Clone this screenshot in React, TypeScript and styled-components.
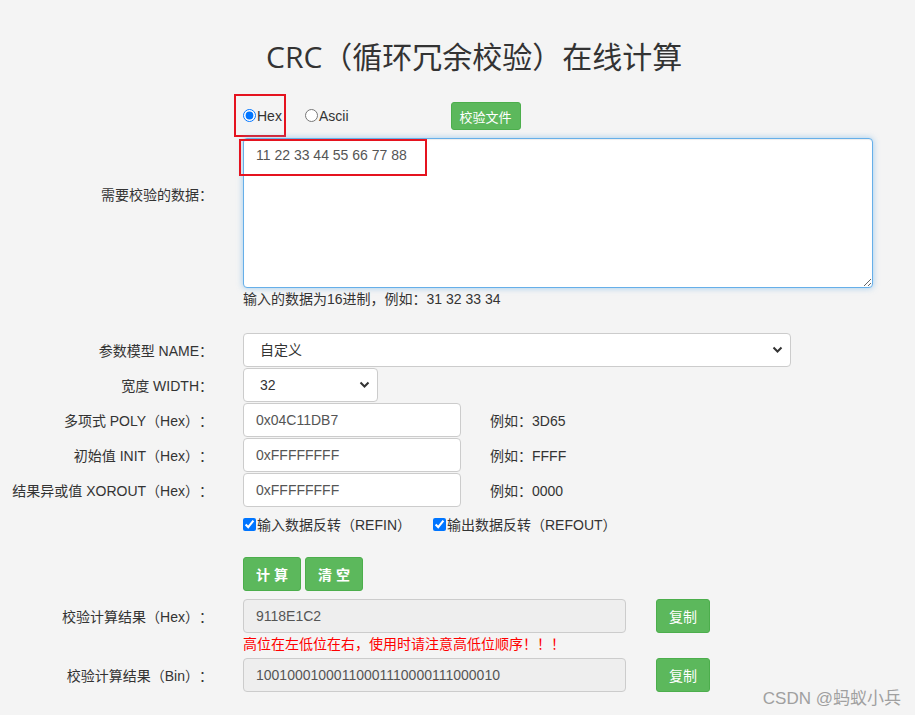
import React from "react";
import styled, { createGlobalStyle } from "styled-components";

const GlobalStyle = createGlobalStyle`
    html, body {
        margin: 0;
        padding: 0;
        background: #f4f4f4;
    }
    body {
        font-family: "Liberation Sans", "Noto Sans CJK SC", sans-serif;
        font-size: 14px;
        color: #333;
        text-spacing-trim: space-all;
    }
    input, textarea, select, button {
        text-spacing-trim: space-all;
    }
`;

const FONT = `"Liberation Sans", "Noto Sans CJK SC", sans-serif`;

function Chevron() {
    return (
        <svg width="11" height="8" viewBox="0 0 11 8">
            <path d="M1.5 1.5 L5.5 5.5 L9.5 1.5" fill="none" stroke="#333" strokeWidth="2" />
        </svg>
    );
}

function App() {
    return (
        <Page>
            <GlobalStyle />
            <Title>CRC（循环冗余校验）在线计算</Title>

            <ModeRow>
                <Marked>
                    <RadioLabel>
                        <input type="radio" name="mode" defaultChecked />Hex
                    </RadioLabel>
                </Marked>
                <RadioLabel>
                    <input type="radio" name="mode" />Ascii
                </RadioLabel>
                <GreenButton $w={70} $h={28} $size={13}>校验文件</GreenButton>
            </ModeRow>

            <DataRow>
                <Label $top={46}>需要校验的数据：</Label>
                <div>
                    <AreaWrap>
                        <DataArea defaultValue="11 22 33 44 55 66 77 88" />
                        <TextMark />
                    </AreaWrap>
                    <Help>输入的数据为16进制，例如：31 32 33 34</Help>
                </div>
            </DataRow>

            <Params>
                <Row>
                    <Label>参数模型 NAME：</Label>
                    <SelectWrap $w={548}>
                        <Select defaultValue="custom">
                            <option value="custom">自定义</option>
                        </Select>
                        <Arrow><Chevron /></Arrow>
                    </SelectWrap>
                </Row>
                <Row>
                    <Label>宽度 WIDTH：</Label>
                    <SelectWrap $w={135}>
                        <Select defaultValue="32">
                            <option value="32">32</option>
                        </Select>
                        <Arrow><Chevron /></Arrow>
                    </SelectWrap>
                </Row>
                <Row>
                    <Label>多项式 POLY（Hex）：</Label>
                    <Field>
                        <TextInput defaultValue="0x04C11DB7" />
                        <Hint>例如：3D65</Hint>
                    </Field>
                </Row>
                <Row>
                    <Label>初始值 INIT（Hex）：</Label>
                    <Field>
                        <TextInput defaultValue="0xFFFFFFFF" />
                        <Hint>例如：FFFF</Hint>
                    </Field>
                </Row>
                <Row>
                    <Label>结果异或值 XOROUT（Hex）：</Label>
                    <Field>
                        <TextInput defaultValue="0xFFFFFFFF" />
                        <Hint>例如：0000</Hint>
                    </Field>
                </Row>
            </Params>

            <CheckRow>
                <CheckLabel $w={190}>
                    <input type="checkbox" defaultChecked />输入数据反转（REFIN）
                </CheckLabel>
                <CheckLabel>
                    <input type="checkbox" defaultChecked />输出数据反转（REFOUT）
                </CheckLabel>
            </CheckRow>

            <ActionRow>
                <GreenButton $w={58} $h={34} $size={14} $spaced>计 算</GreenButton>
                <GreenButton $w={58} $h={34} $size={14} $spaced>清 空</GreenButton>
            </ActionRow>

            <ResultRow $top={8}>
                <Label>校验计算结果（Hex）：</Label>
                <Field $gap={30}>
                    <ResultInput readOnly value="9118E1C2" />
                    <GreenButton $w={54} $h={34} $size={14}>复制</GreenButton>
                </Field>
            </ResultRow>
            <Warning>高位在左低位在右，使用时请注意高低位顺序！！！</Warning>
            <ResultRow $top={4}>
                <Label>校验计算结果（Bin）：</Label>
                <Field $gap={30}>
                    <ResultInput readOnly value="10010001000110001110000111000010" />
                    <GreenButton $w={54} $h={34} $size={14}>复制</GreenButton>
                </Field>
            </ResultRow>

            <Watermark>CSDN @蚂蚁小兵</Watermark>
        </Page>
    );
}

const Page = styled.div`
    position: relative;
    width: 915px;
    height: 715px;
    overflow: hidden;
    padding-top: 39px;
    box-sizing: border-box;
`;

const Title = styled.h1`
    margin: 0 0 0 266px;
    font-family: "Open Sans", "Noto Sans CJK SC", sans-serif;
    font-weight: 400;
    font-size: 30px;
    line-height: 36px;
    color: #333;
`;

const ModeRow = styled.div`
    display: flex;
    align-items: center;
    margin: 19px 0 0 234px;
    height: 43px;
`;

const Marked = styled.div`
    display: flex;
    align-items: center;
    width: 52px;
    height: 43px;
    box-sizing: border-box;
    border: 2px solid #e5131f;
    padding-left: 5px;
    margin-right: 17px;
`;

const RadioLabel = styled.label`
    display: flex;
    align-items: center;
    font-size: 14px;
    color: #333;
    input {
        margin: 0 1px 0 2px;
        width: 13px;
        height: 13px;
    }
`;

const GreenButton = styled.button<{ $w: number; $h: number; $size: number; $spaced?: boolean }>`
    width: ${(p) => p.$w}px;
    height: ${(p) => p.$h}px;
    flex: none;
    padding: 0;
    border: 1px solid #4cae4c;
    border-radius: 3px;
    background: #5cb85c;
    color: #fff;
    font-family: ${FONT};
    font-size: ${(p) => p.$size}px;
    font-weight: ${(p) => (p.$spaced ? 700 : 400)};
    cursor: pointer;
    ${ModeRow} & {
        margin-left: 102px;
        margin-top: 1px;
    }
`;

const DataRow = styled.div`
    display: grid;
    grid-template-columns: 213px 630px;
    column-gap: 30px;
    margin-top: 1px;
`;

const Label = styled.label<{ $top?: number }>`
    text-align: right;
    font-size: 14px;
    color: #333;
    white-space: nowrap;
    align-self: ${(p) => (p.$top ? "start" : "center")};
    margin-top: ${(p) => p.$top ?? 0}px;
`;

const AreaWrap = styled.div`
    position: relative;
`;

const DataArea = styled.textarea`
    display: block;
    width: 630px;
    height: 150px;
    box-sizing: border-box;
    padding: 6px 12px;
    border: 1px solid #66afe9;
    border-radius: 4px;
    box-shadow: inset 0 1px 1px rgba(0, 0, 0, 0.075), 0 0 6px rgba(102, 175, 233, 0.6);
    outline: none;
    resize: vertical;
    background: #fff;
    color: #555;
    font-family: ${FONT};
    font-size: 14px;
    line-height: 20px;
`;

const TextMark = styled.div`
    position: absolute;
    left: -4px;
    top: 1px;
    width: 188px;
    height: 37px;
    box-sizing: border-box;
    border: 2px solid #e5131f;
    pointer-events: none;
`;

const Help = styled.div`
    margin-top: 2px;
    font-size: 14px;
    color: #333;
    line-height: 18px;
`;

const Params = styled.div`
    display: flex;
    flex-direction: column;
    gap: 1px;
    margin-top: 25px;
`;

const Row = styled.div`
    display: grid;
    grid-template-columns: 213px auto;
    column-gap: 30px;
    height: 34px;
`;

const SelectWrap = styled.div<{ $w: number }>`
    position: relative;
    width: ${(p) => p.$w}px;
`;

const Select = styled.select`
    appearance: none;
    width: 100%;
    height: 34px;
    box-sizing: border-box;
    padding: 0 12px 0 16px;
    border: 1px solid #ccc;
    border-radius: 4px;
    background: #fff;
    color: #333;
    font-family: ${FONT};
    font-size: 14px;
    outline: none;
`;

const Arrow = styled.span`
    position: absolute;
    right: 8px;
    top: 13px;
    display: flex;
    pointer-events: none;
`;

const Field = styled.div<{ $gap?: number }>`
    display: flex;
    align-items: center;
    gap: ${(p) => p.$gap ?? 29}px;
`;

const TextInput = styled.input`
    width: 218px;
    height: 34px;
    box-sizing: border-box;
    padding: 0 12px;
    border: 1px solid #ccc;
    border-radius: 4px;
    background: #fff;
    color: #555;
    font-family: ${FONT};
    font-size: 14px;
    outline: none;
`;

const Hint = styled.span`
    font-size: 14px;
    color: #333;
`;

const CheckRow = styled.div`
    display: flex;
    align-items: center;
    margin: 8px 0 0 243px;
    height: 18px;
`;

const CheckLabel = styled.label<{ $w?: number }>`
    display: flex;
    align-items: center;
    width: ${(p) => (p.$w ? `${p.$w}px` : "auto")};
    font-size: 14px;
    color: #333;
    input {
        margin: 0 1px 0 0;
        width: 13px;
        height: 13px;
    }
`;

const ActionRow = styled.div`
    display: flex;
    gap: 4px;
    margin: 24px 0 0 243px;
`;

const ResultRow = styled(Row)<{ $top: number }>`
    margin-top: ${(p) => p.$top}px;
`;

const ResultInput = styled(TextInput)`
    width: 383px;
    background: #eee;
    color: #555;
`;

const Warning = styled.div`
    margin: 1px 0 0 243px;
    height: 20px;
    line-height: 20px;
    font-size: 14px;
    color: #f00;
`;

const Watermark = styled.div`
    position: absolute;
    right: 14px;
    bottom: 6px;
    font-family: ${FONT};
    font-size: 17px;
    color: #a0a0a0;
`;

export default App;
